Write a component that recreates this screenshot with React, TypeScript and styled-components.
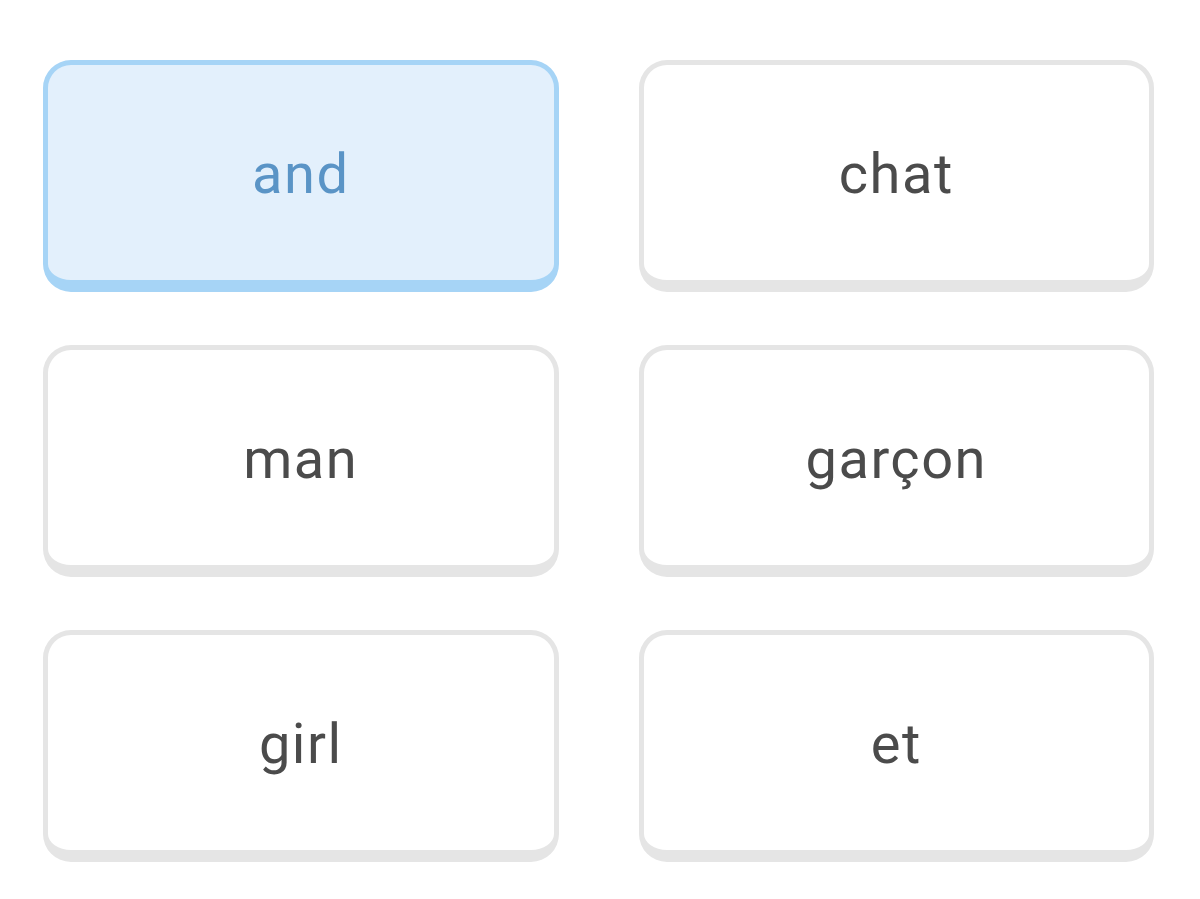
import React from 'react'
import styled, { createGlobalStyle } from 'styled-components'

const GlobalStyle = createGlobalStyle`
    html, body {
        margin: 0;
        padding: 0;
        background: #fff;
    }
`

const words = [
    { text: 'and', selected: true },
    { text: 'chat' },
    { text: 'man' },
    { text: 'garçon' },
    { text: 'girl' },
    { text: 'et' },
]

export default function App() {
    return (
        <>
            <GlobalStyle />
            <Board>
                {words.map((w) => (
                    <Tile key={w.text} $selected={!!w.selected}>
                        {w.text}
                    </Tile>
                ))}
            </Board>
        </>
    )
}

const Board = styled.div`
    width: 1200px;
    height: 899px;
    box-sizing: border-box;
    padding: 60px 46px 0 43px;
    display: grid;
    grid-template-columns: 1fr 1fr;
    grid-auto-rows: 232px;
    column-gap: 80px;
    row-gap: 53px;
`

const Tile = styled.div<{ $selected: boolean }>`
    box-sizing: border-box;
    display: flex;
    align-items: center;
    justify-content: center;
    border: 5px solid ${(p) => (p.$selected ? '#a6d4f6' : '#e5e5e5')};
    border-bottom-width: 12px;
    border-radius: 28px;
    background: ${(p) => (p.$selected ? '#e3f0fc' : '#ffffff')};
    color: ${(p) => (p.$selected ? '#5a94c6' : '#4b4b4b')};
    font-family: Roboto, 'Noto Sans', sans-serif;
    font-size: 56px;
    letter-spacing: 1.5px;
    padding-top: 2px;
`
